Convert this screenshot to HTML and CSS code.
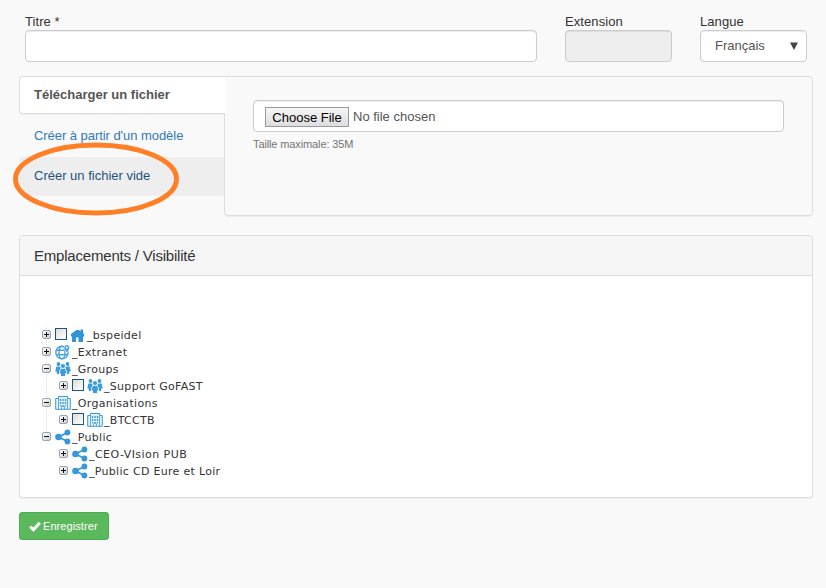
FILE: index.html
```html
<!DOCTYPE html>
<html lang="fr">
<head>
<meta charset="utf-8">
<title>Nouveau fichier</title>
<link rel="stylesheet" href="styles.css">
</head>
<body>
<svg class="defs" width="0" height="0">
  <symbol id="home" viewBox="0 0 16 16"><path fill="#2f93d6" d="M6.500 3 1 7v2.500h1V15h4v-4.500h2.500V15h4.500V9.500h1V7L13 5.800V2.500h-2.500v2L9 3z"/></symbol>
  <symbol id="globe" viewBox="0 0 16 16"><g fill="none" stroke="#4ba3dc" stroke-width="1.400"><circle cx="7" cy="8.500" r="6.200"/><ellipse cx="7" cy="8.500" rx="3" ry="6.200"/><path d="M1.500 6.200h11M1 10.700h12"/></g><path fill="#4ba3dc" stroke="#fff" stroke-width=".6" d="M11.800 9C9.500 6 9 5 9 3.500a2.800 2.800 0 0 1 5.600 0c0 1.500-.5 2.500-2.800 5.500z"/><circle cx="11.800" cy="3.500" r="1" fill="#fff"/></symbol>
  <symbol id="group" viewBox="0 0 16 16"><g fill="#3c9bd9"><circle cx="3.500" cy="3" r="1.900"/><circle cx="12.500" cy="3" r="1.900"/><circle cx="8" cy="5" r="2.100"/><path d="M.3 10.500 1.300 5.500h3.400l1 1L4.300 10l-.3 3H2l-.4-2.500zM15.700 10.500l-1-5h-3.400l-1 1L11.700 10l.3 3h2l.4-2.500zM4.600 12 5.800 7.700h4.400l1.200 4.300h-1l-.4 3H6l-.4-3z"/></g></symbol>
  <symbol id="org" viewBox="0 0 16 16"><path fill="#e4f2fb" stroke="#3c9bd9" d="M.7 3.500h2.800v-2h9v2h2.800v10.800H.7z"/><path stroke="#3c9bd9" stroke-width="1.400" stroke-dasharray="2 1" d="M5.500 4v7M8 4v7M10.500 4v7"/><path stroke="#3c9bd9" d="M3.500 3.500V14M12.500 3.500V14M6.500 14v-2.500h3V14" fill="none" stroke-width=".8"/></symbol>
  <symbol id="share" viewBox="0 0 16 16"><path fill="none" stroke="#3498db" stroke-width="1.800" d="M12.500 3.500 3.500 8l9 4.500"/><g fill="#3498db"><circle cx="3.500" cy="8" r="3.300"/><circle cx="12.400" cy="3.500" r="2.900"/><circle cx="12.400" cy="12.500" r="2.900"/></g></symbol>
</svg>
<main class="page">
  <form>
    <div class="fields">
      <label class="field title">Titre *<span class="input"></span></label>
      <label class="field">Extension<span class="input disabled"></span></label>
      <label class="field">Langue<span class="input select">Français<svg width="8" height="8"><path fill="#444" d="M0 .5h8L4 8z"/></svg></span></label>
    </div>
    <section class="tabs">
      <nav class="tab-list">
        <a class="tab active">Télécharger un fichier</a>
        <a class="tab template">Créer à partir d'un modèle</a>
        <a class="tab hover">Créer un fichier vide</a>
        <svg class="mark" width="168" height="76"><ellipse cx="84" cy="38" rx="80.500" ry="34" fill="none" stroke="#ff7f27" stroke-width="5"/></svg>
      </nav>
      <div class="tab-content">
        <div class="input file"><span class="choose">Choose File</span>No file chosen</div>
        <p class="help">Taille maximale: 35M</p>
      </div>
    </section>
    <section class="panel">
      <h2 class="panel-heading">Emplacements / Visibilité</h2>
      <div class="tree">
        <div class="node"><i class="exp plus"></i><i class="check"></i><svg class="icon"><use href="#home"/></svg><span>_bspeidel</span></div>
        <div class="node"><i class="exp plus"></i><svg class="icon"><use href="#globe"/></svg><span>_Extranet</span></div>
        <div class="node"><i class="exp"></i><svg class="icon"><use href="#group"/></svg><span>_Groups</span></div>
        <div class="node child"><i class="exp plus"></i><i class="check"></i><svg class="icon"><use href="#group"/></svg><span>_Support GoFAST</span></div>
        <div class="node"><i class="exp"></i><svg class="icon"><use href="#org"/></svg><span>_Organisations</span></div>
        <div class="node child"><i class="exp plus"></i><i class="check"></i><svg class="icon"><use href="#org"/></svg><span>_BTCCTB</span></div>
        <div class="node"><i class="exp"></i><svg class="icon"><use href="#share"/></svg><span>_Public</span></div>
        <div class="node child"><i class="exp plus"></i><svg class="icon"><use href="#share"/></svg><span class="wide">_CEO-VIsion PUB</span></div>
        <div class="node child"><i class="exp plus"></i><svg class="icon"><use href="#share"/></svg><span>_Public CD Eure et Loir</span></div>
      </div>
    </section>
    <button class="save" type="button"><svg width="12" height="11" viewBox="0 0 12 11"><path fill="none" stroke="#fff" stroke-width="3" d="m1.200 5.500 3.300 3.300L10.800 1.800"/></svg>Enregistrer</button>
  </form>
</main>
</body>
</html>
```

FILE: styles.css
```css
* { box-sizing: border-box; }
body { margin: 0; background: #f9f9f9; color: #333; font: 13px/18px "Liberation Sans", Arial, sans-serif; }
.defs { position: absolute; }
.page { width: 794px; margin-left: 19px; padding-top: 13px; }
.fields { display: grid; grid-template-columns: 512px 107px 107px; column-gap: 28px; padding-left: 6px; }
.field { display: block; letter-spacing: .08px; line-height: 17px; }
.input { display: flex; align-items: center; height: 32px; background: #fff; border: 1px solid #ccc; border-radius: 4px; box-shadow: inset 0 1px 1px rgba(0,0,0,.075); color: #555; }
.disabled { background: #eee; }
.select { justify-content: space-between; padding: 0 8px 0 14px; line-height: 18px; letter-spacing: 0; }
.tabs { display: flex; height: 140px; margin-top: 14px; }
.tab-list { position: relative; width: 206px; z-index: 1; }
.tab { display: block; height: 39px; padding: 10px 15px; margin-bottom: 2px; color: #337ab7; border-radius: 4px 0 0 4px; }
.template { padding-top: 11px; letter-spacing: -.05px; }
.active { height: 38px; padding: 9px 14px; background: #fff; border: 1px solid #ddd; border-right: 0; color: #555; font-weight: bold; box-shadow: 0 1px 1px rgba(0,0,0,.05); }
.hover { width: 205px; background: #eee; color: #23527c; }
.mark { position: absolute; left: -7px; top: 65px; }
.tab-content { width: 589px; margin-left: -1px; padding: 23px 28px; border: 1px solid #ddd; border-radius: 0 4px 4px 4px; box-shadow: 0 1px 1px rgba(0,0,0,.05); }
.file { padding: 2px 0 0 11px; }
.choose { width: 84px; height: 20px; margin: 0 4px 0 0; border: 1px solid #999; background: linear-gradient(#f6f6f6, #ddd); color: #000; text-align: center; line-height: 19px; }
.help { margin: 4px 0; font-size: 11px; line-height: 16px; letter-spacing: -.12px; color: #737373; }
.panel { height: 263px; margin-top: 19px; background: #fff; border: 1px solid #ddd; border-radius: 4px; box-shadow: 0 1px 1px rgba(0,0,0,.05); }
.panel-heading { height: 40px; margin: 0; padding: 10px 14px; border-bottom: 1px solid #ddd; border-radius: 3px 3px 0 0; background: #f5f5f5; font-size: 15px; font-weight: normal; line-height: 20px; letter-spacing: -.2px; }
.tree { margin: 50px 22px; background: repeating-linear-gradient(#ddd 0 1px, transparent 1px 2px) 4px 0 / 1px 108px no-repeat; font: 11px/17px "DejaVu Sans", Verdana, sans-serif; letter-spacing: .3px; }
.node { display: flex; align-items: center; height: 17px; }
.node span { margin: 2px 0 0 -1px; }
.wide { letter-spacing: .45px; }
.child { padding-left: 17px; }
.exp { flex: none; width: 9px; height: 9px; margin-right: 4px; border: 1px solid #91a4b9; border-radius: 2px; background: linear-gradient(#111, #111) center / 5px 1px no-repeat, linear-gradient(135deg, #fff, #d0cec5); }
.plus { background: linear-gradient(#111, #111) center / 5px 1px no-repeat, linear-gradient(#111, #111) center / 1px 5px no-repeat, linear-gradient(135deg, #fff, #d0cec5); }
.check { flex: none; width: 12px; height: 12px; margin: 0 3px 1px 0; border: 1px solid #1d5281; background: linear-gradient(135deg, #dcdcd7, #fff); }
.icon { flex: none; width: 16px; height: 16px; margin-right: 2px; }
.save { display: flex; align-items: center; gap: 2px; width: 90px; height: 28px; margin-top: 14px; padding: 0 9px; border: 1px solid #4cae4c; border-radius: 3px; background: #5cb85c; color: #fff; font: 11px/16px "Liberation Sans", Arial, sans-serif; letter-spacing: .08px; }
```
